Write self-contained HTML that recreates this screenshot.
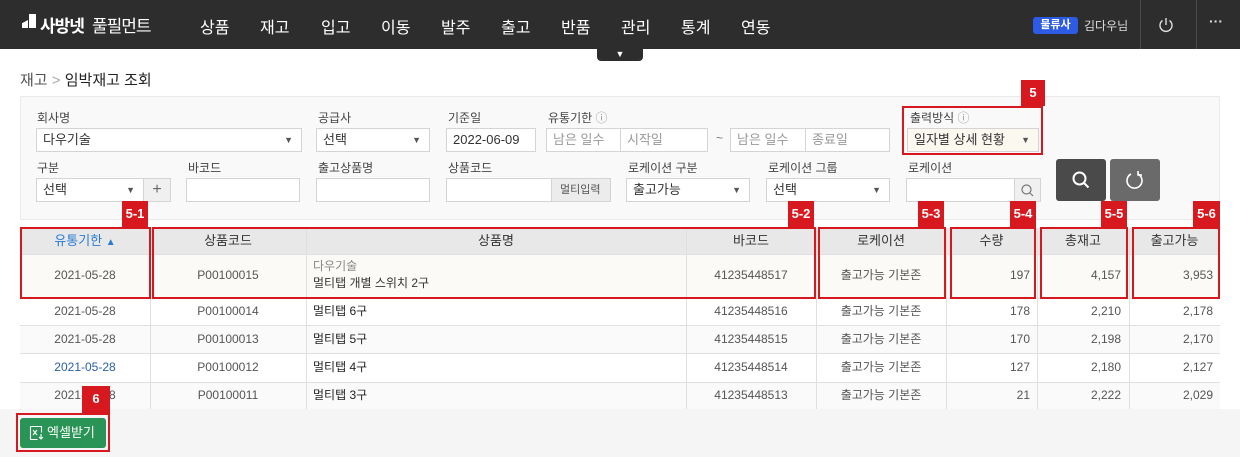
<!DOCTYPE html>
<html><head><meta charset="utf-8"><style>
*{box-sizing:border-box;margin:0;padding:0}
body{width:1240px;height:457px;position:relative;overflow:hidden;background:#fff;font-family:"Liberation Sans","Noto Sans CJK KR",sans-serif;color:#333;font-size:12px}
.a{position:absolute}
.hd{left:0;top:0;width:1240px;height:49px;background:#2d2d2d}
.nav{top:14px;color:#fff;font-size:16px}
.lbl{font-size:12px;color:#444}
.in{background:#fff;border:1px solid #d4d4d4;height:24px;font-size:13px;line-height:22px;padding-left:6px;color:#333}
.ph{color:#999}
.arr{position:absolute;right:8px;top:0;font-size:9px;color:#555}
.bd{background:#d7191f;color:#fff;font-size:13px;font-weight:bold;text-align:center;line-height:26px;height:26px}
.rb{border:2px solid #d7191f}
.c{position:absolute;text-align:center;font-size:12px;color:#555;line-height:16px;height:16px}
.r{text-align:right}
.hl{background:#e8e8e8}
.vl{position:absolute;width:1px;background:#e0e0e0}
.hz{position:absolute;height:1px;background:#e0e0e0;left:20px;width:1200px}
</style></head><body>
<div class="a hd"></div>
<div class="a" style="left:22px;top:14px;width:14px;height:14px">
<div class="a" style="left:0;top:6px;width:6px;height:8px;background:#fff;clip-path:polygon(100% 0,100% 100%,0 100%,0 40%)"></div>
<div class="a" style="left:7px;top:0;width:7px;height:14px;background:#fff"></div></div>
<div class="a" style="left:40px;top:12px;color:#fff;font-size:17px;font-weight:bold;letter-spacing:-1px">사방넷</div>
<div class="a" style="left:92px;top:12px;color:#fff;font-size:17px;letter-spacing:-1px">풀필먼트</div>
<div class="a nav" style="left:200px">상품</div>
<div class="a nav" style="left:260px">재고</div>
<div class="a nav" style="left:321px">입고</div>
<div class="a nav" style="left:381px">이동</div>
<div class="a nav" style="left:441px">발주</div>
<div class="a nav" style="left:501px">출고</div>
<div class="a nav" style="left:561px">반품</div>
<div class="a nav" style="left:621px">관리</div>
<div class="a nav" style="left:681px">통계</div>
<div class="a nav" style="left:741px">연동</div>
<div class="a" style="left:597px;top:44px;width:46px;height:17px;background:#2d2d2d;border-radius:0 0 4px 4px;color:#fff;font-size:9px;text-align:center;line-height:20px">▼</div>
<div class="a" style="left:1033px;top:17px;width:45px;height:17px;background:#2d5be3;border-radius:3px;color:#fff;font-size:11px;font-weight:bold;text-align:center;line-height:17px">물류사</div>
<div class="a" style="left:1084px;top:17px;color:#ddd;font-size:12px">김다우님</div>
<div class="a" style="left:1140px;top:0;width:1px;height:49px;background:#4a4a4a"></div>
<div class="a" style="left:1196px;top:0;width:1px;height:49px;background:#4a4a4a"></div>
<svg class="a" style="left:1157px;top:16px" width="18" height="18" viewBox="0 0 18 18" fill="none" stroke="#ddd" stroke-width="1.4"><path d="M5.5 4.5a6 6 0 1 0 7 0"/><path d="M9 2v7"/></svg>
<div class="a" style="left:1209px;top:13px;color:#ddd;font-size:14px;font-weight:bold">···</div>

<div class="a" style="left:20px;top:69px;font-size:15px;color:#555">재고 <span style="color:#aaa">&gt;</span> <span style="color:#222">임박재고 조회</span></div>

<div class="a" style="left:20px;top:96px;width:1200px;height:124px;background:#f9f9f9;border:1px solid #eaeaea"></div>
<div class="a lbl" style="left:37px;top:109px">회사명</div>
<div class="a in" style="left:36px;top:128px;width:266px">다우기술<span class="arr">▼</span></div>
<div class="a lbl" style="left:318px;top:109px">공급사</div>
<div class="a in" style="left:316px;top:128px;width:114px">선택<span class="arr">▼</span></div>
<div class="a lbl" style="left:448px;top:109px">기준일</div>
<div class="a in" style="left:446px;top:128px;width:90px">2022-06-09</div>
<div class="a lbl" style="left:548px;top:109px">유통기한 <span style="color:#999">ⓘ</span></div>
<div class="a in ph" style="left:546px;top:128px;width:75px">남은 일수</div>
<div class="a in ph" style="left:620px;top:128px;width:88px">시작일</div>
<div class="a" style="left:716px;top:131px;color:#777">~</div>
<div class="a in ph" style="left:730px;top:128px;width:76px">남은 일수</div>
<div class="a in ph" style="left:805px;top:128px;width:85px">종료일</div>
<div class="a lbl" style="left:910px;top:109px">출력방식 <span style="color:#999">ⓘ</span></div>
<div class="a in" style="left:907px;top:128px;width:132px;background:#fbf8f0">일자별 상세 현황<span class="arr">▼</span></div>
<div class="a rb" style="left:902px;top:106px;width:141px;height:49px"></div>
<div class="a bd" style="left:1021px;top:80px;width:24px">5</div>

<div class="a lbl" style="left:37px;top:159px">구분</div>
<div class="a in" style="left:36px;top:178px;width:108px">선택<span class="arr">▼</span></div>
<div class="a in" style="left:143px;top:178px;width:28px;background:#f0f0f0;padding:0;text-align:center;font-size:16px;color:#666">+</div>
<div class="a lbl" style="left:188px;top:159px">바코드</div>
<div class="a in" style="left:186px;top:178px;width:114px"></div>
<div class="a lbl" style="left:318px;top:159px">출고상품명</div>
<div class="a in" style="left:316px;top:178px;width:114px"></div>
<div class="a lbl" style="left:448px;top:159px">상품코드</div>
<div class="a in" style="left:446px;top:178px;width:106px"></div>
<div class="a in" style="left:551px;top:178px;width:60px;background:#ececec;font-size:11px;padding-left:8px;color:#555">멀티입력</div>
<div class="a lbl" style="left:628px;top:159px">로케이션 구분</div>
<div class="a in" style="left:626px;top:178px;width:124px">출고가능<span class="arr">▼</span></div>
<div class="a lbl" style="left:768px;top:159px">로케이션 그룹</div>
<div class="a in" style="left:766px;top:178px;width:124px">선택<span class="arr">▼</span></div>
<div class="a lbl" style="left:908px;top:159px">로케이션</div>
<div class="a in" style="left:906px;top:178px;width:110px"></div>
<div class="a in" style="left:1014px;top:178px;width:27px;background:#f0f0f0;padding:0"><svg width="25" height="22" viewBox="0 0 25 22" fill="none" stroke="#777" stroke-width="1.2"><circle cx="11.5" cy="10.5" r="4.5"/><path d="M15 14l3 3"/></svg></div>
<div class="a" style="left:1056px;top:159px;width:50px;height:42px;background:#4a4a4a;border-radius:3px"><svg width="50" height="42" viewBox="0 0 50 42" fill="none" stroke="#fff" stroke-width="2"><circle cx="23.5" cy="19.5" r="6"/><path d="M28 24l4.5 4.5"/></svg></div>
<div class="a" style="left:1110px;top:159px;width:50px;height:42px;background:#6a6a6a;border-radius:3px"><svg width="50" height="42" viewBox="0 0 50 42" fill="none" stroke="#fff" stroke-width="1.6"><path d="M21 15a7.5 7.5 0 1 0 7 0"/><path d="M28 12v4h4"/></svg></div>

<div class="a hl" style="left:20px;top:228px;width:1200px;height:27px"></div>
<div class="a" style="left:20px;top:255px;width:1200px;height:43px;background:#fbfaf7"></div>
<div class="a" style="left:20px;top:325px;width:1200px;height:28px;background:#fafafa"></div>
<div class="a" style="left:20px;top:382px;width:1200px;height:27px;background:#fafafa"></div>
<div class="hz" style="top:254px"></div><div class="hz" style="top:298px"></div><div class="hz" style="top:325px"></div><div class="hz" style="top:353px"></div><div class="hz" style="top:382px"></div>
<div class="vl" style="left:150px;top:228px;height:181px"></div>
<div class="vl" style="left:306px;top:228px;height:181px"></div>
<div class="vl" style="left:686px;top:228px;height:181px"></div>
<div class="vl" style="left:816px;top:228px;height:181px"></div>
<div class="vl" style="left:946px;top:228px;height:181px"></div>
<div class="vl" style="left:1037px;top:228px;height:181px"></div>
<div class="vl" style="left:1129px;top:228px;height:181px"></div>

<div class="c" style="left:20px;top:233px;width:130px;color:#2a7ad5;font-size:13px">유통기한 <span style="font-size:10px">▲</span></div>
<div class="c" style="left:150px;top:233px;width:156px;font-size:13px;color:#333">상품코드</div>
<div class="c" style="left:306px;top:233px;width:380px;font-size:13px;color:#333">상품명</div>
<div class="c" style="left:686px;top:233px;width:130px;font-size:13px;color:#333">바코드</div>
<div class="c" style="left:816px;top:233px;width:130px;font-size:13px;color:#333">로케이션</div>
<div class="c" style="left:946px;top:233px;width:91px;font-size:13px;color:#333">수량</div>
<div class="c" style="left:1037px;top:233px;width:92px;font-size:13px;color:#333">총재고</div>
<div class="c" style="left:1129px;top:233px;width:91px;font-size:13px;color:#333">출고가능</div>

<div class="c" style="left:20px;top:267px;width:130px">2021-05-28</div>
<div class="c" style="left:150px;top:267px;width:156px">P00100015</div>
<div class="c" style="left:313px;top:258px;text-align:left;color:#888">다우기술</div>
<div class="c" style="left:313px;top:275px;text-align:left;color:#333">멀티탭 개별 스위치 2구</div>
<div class="c" style="left:686px;top:267px;width:130px">41235448517</div>
<div class="c" style="left:816px;top:267px;width:130px">출고가능 기본존</div>
<div class="c r" style="left:946px;top:267px;width:84px">197</div>
<div class="c r" style="left:1037px;top:267px;width:84px">4,157</div>
<div class="c r" style="left:1129px;top:267px;width:84px">3,953</div>

<div class="c" style="left:20px;top:303px;width:130px">2021-05-28</div><div class="c" style="left:150px;top:303px;width:156px">P00100014</div><div class="c" style="left:313px;top:303px;color:#222">멀티탭 6구</div><div class="c" style="left:686px;top:303px;width:130px">41235448516</div><div class="c" style="left:816px;top:303px;width:130px">출고가능 기본존</div><div class="c r" style="left:946px;top:303px;width:84px">178</div><div class="c r" style="left:1037px;top:303px;width:84px">2,210</div><div class="c r" style="left:1129px;top:303px;width:84px">2,178</div>
<div class="c" style="left:20px;top:331px;width:130px">2021-05-28</div><div class="c" style="left:150px;top:331px;width:156px">P00100013</div><div class="c" style="left:313px;top:331px;color:#222">멀티탭 5구</div><div class="c" style="left:686px;top:331px;width:130px">41235448515</div><div class="c" style="left:816px;top:331px;width:130px">출고가능 기본존</div><div class="c r" style="left:946px;top:331px;width:84px">170</div><div class="c r" style="left:1037px;top:331px;width:84px">2,198</div><div class="c r" style="left:1129px;top:331px;width:84px">2,170</div>
<div class="c" style="left:20px;top:359px;width:130px;color:#2a5fa8">2021-05-28</div><div class="c" style="left:150px;top:359px;width:156px">P00100012</div><div class="c" style="left:313px;top:359px;color:#222">멀티탭 4구</div><div class="c" style="left:686px;top:359px;width:130px">41235448514</div><div class="c" style="left:816px;top:359px;width:130px">출고가능 기본존</div><div class="c r" style="left:946px;top:359px;width:84px">127</div><div class="c r" style="left:1037px;top:359px;width:84px">2,180</div><div class="c r" style="left:1129px;top:359px;width:84px">2,127</div>
<div class="c" style="left:20px;top:387px;width:130px">2021-05-28</div><div class="c" style="left:150px;top:387px;width:156px">P00100011</div><div class="c" style="left:313px;top:387px;color:#222">멀티탭 3구</div><div class="c" style="left:686px;top:387px;width:130px">41235448513</div><div class="c" style="left:816px;top:387px;width:130px">출고가능 기본존</div><div class="c r" style="left:946px;top:387px;width:84px">21</div><div class="c r" style="left:1037px;top:387px;width:84px">2,222</div><div class="c r" style="left:1129px;top:387px;width:84px">2,029</div>

<div class="a rb" style="left:20px;top:227px;width:131px;height:72px"></div>
<div class="a rb" style="left:152px;top:227px;width:664px;height:72px"></div>
<div class="a rb" style="left:818px;top:227px;width:128px;height:72px"></div>
<div class="a rb" style="left:950px;top:227px;width:86px;height:72px"></div>
<div class="a rb" style="left:1040px;top:227px;width:88px;height:72px"></div>
<div class="a rb" style="left:1132px;top:227px;width:88px;height:72px"></div>
<div class="a bd" style="left:122px;top:201px;width:26px">5-1</div>
<div class="a bd" style="left:788px;top:201px;width:26px">5-2</div>
<div class="a bd" style="left:918px;top:201px;width:26px">5-3</div>
<div class="a bd" style="left:1010px;top:201px;width:26px">5-4</div>
<div class="a bd" style="left:1101px;top:201px;width:26px">5-5</div>
<div class="a bd" style="left:1193px;top:201px;width:27px">5-6</div>

<div class="a" style="left:0;top:409px;width:1240px;height:48px;background:#f5f5f5"></div>
<div class="a rb" style="left:16px;top:413px;width:94px;height:39px"></div>
<div class="a" style="left:20px;top:418px;width:86px;height:30px;background:#2a9456;border-radius:3px;color:#fff;font-size:13px;line-height:30px;padding-left:27px">엑셀받기</div>
<svg class="a" style="left:29px;top:425px" width="16" height="16" viewBox="0 0 16 16" fill="none" stroke="#fff" stroke-width="1.1"><path d="M1.5 1.5h11v6M1.5 1.5v13h7"/><path d="M4 5l4 5M8 5l-4 5"/><path d="M12 9v5M10 12l2 2 2-2"/></svg>
<div class="a bd" style="left:82px;top:386px;width:28px;height:27px">6</div>
</body></html>
